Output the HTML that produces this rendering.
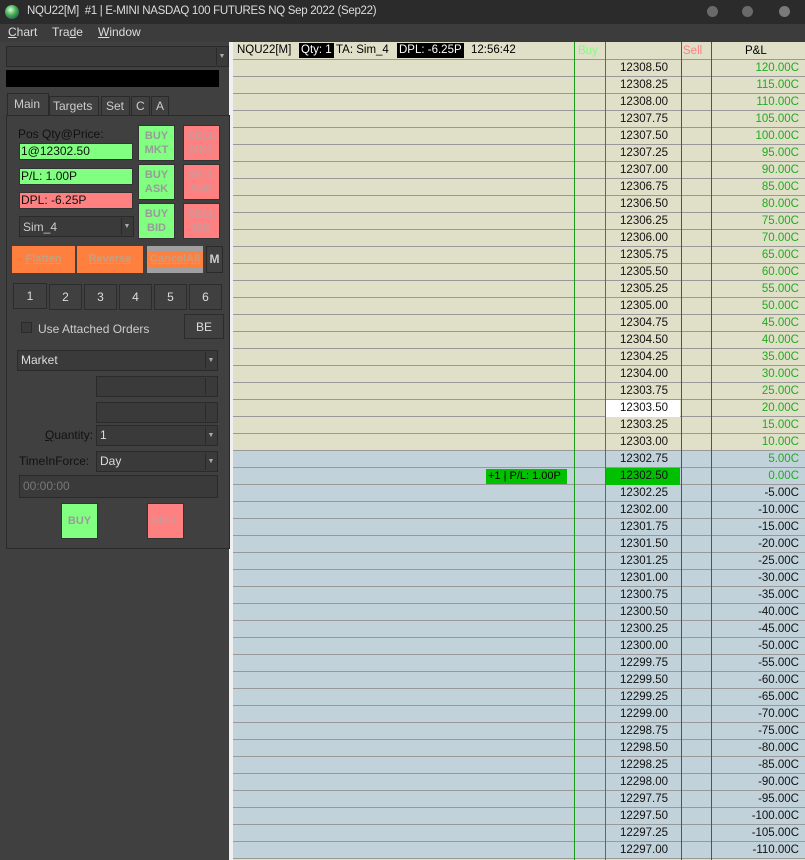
<!DOCTYPE html>
<html><head><meta charset="utf-8"><style>
*{box-sizing:border-box;margin:0;padding:0}
body{width:805px;height:860px;overflow:hidden;background:#404040;font-family:"Liberation Sans",Arial,sans-serif;font-size:12px;position:relative}
.a{position:absolute}
#title{left:0;top:0;width:805px;height:24px;background:#2b2b2b;color:#ddd;font-size:11px}
#menu{left:0;top:24px;width:805px;height:18px;background:#3c3c3c;color:#ddd;font-size:12px}
.dot{width:11px;height:11px;border-radius:50%;background:#6a6a6a;top:6px}
.btn{font-size:11px;font-weight:bold;text-align:center;line-height:14px;border:1px solid #333}
.g{background:#80ff80;color:#9a9a9a}
.r{background:#ff8080;color:#c99}
.o{background:#ff7f3f;color:#c4a080;font-weight:bold;font-size:11px;text-align:center;line-height:26px}
.num{height:26px;border:1px solid #2c2c2c;color:#ddd;text-align:center;line-height:24px;font-size:12px}
.dd{background:#3a3a3a;border:1px solid #2a2a2a;color:#ddd;font-size:12px;padding-left:3px;line-height:19px}
.dd i{position:absolute;right:1px;top:1px;width:11px;bottom:1px;border-left:1px solid #2a2a2a;font-style:normal;font-size:7px;color:#aaa;text-align:center;line-height:17px}
#lad{left:233px;top:42px;width:572px;height:818px;background:#e0dfc8}
.row{position:absolute;left:0;width:572px;height:17px;border-bottom:1px solid #999;font-size:11.5px;line-height:17px}
.row .p{position:absolute;left:372px;width:75px;text-align:right;padding-right:12px;color:#111}
.row .l{position:absolute;right:6px;text-align:right;color:#22aa22}
.b{background:#c1d2da}
.vl{position:absolute;top:0;width:1px;height:818px}
</style></head><body>
<div id="title" class="a">
 <div class="a" style="left:5px;top:5px;width:14px;height:14px;border-radius:50%;background:radial-gradient(circle at 40% 35%,#cfe,#4a4 45%,#247 90%)"></div>
 <div class="a" style="left:27px;top:5px;font-size:11.5px;letter-spacing:-0.3px">NQU22[M]&nbsp; #1 | E-MINI NASDAQ 100 FUTURES NQ Sep 2022 (Sep22)</div>
 <div class="a dot" style="left:707px"></div><div class="a dot" style="left:742px"></div><div class="a dot" style="left:779px;background:#7a7a7a"></div>
</div>
<div id="menu" class="a">
 <span class="a" style="left:8px;top:1px"><u>C</u>hart</span>
 <span class="a" style="left:52px;top:1px">Tra<u>d</u>e</span>
 <span class="a" style="left:98px;top:1px"><u>W</u>indow</span>
</div>
<div class="a" style="left:229px;top:42px;width:4px;height:818px;background:#f0f0f0"></div>
<div class="a dd" style="left:6px;top:46px;width:223px;height:21px"><i>▼</i></div>
<div class="a" style="left:6px;top:70px;width:213px;height:17px;background:#000"></div>
<div class="a" style="left:7px;top:93px;width:42px;height:23px;background:#404040;border:1px solid #2a2a2a;border-bottom:none;color:#ccc;font-size:12px;padding:3px 0 0 6px">Main</div>
<div class="a" style="left:49px;top:96px;width:50px;height:20px;border:1px solid #2a2a2a;color:#ccc;font-size:12px;padding:2px 0 0 3px">Targets</div>
<div class="a" style="left:101px;top:96px;width:29px;height:20px;border:1px solid #2a2a2a;color:#ccc;font-size:12px;padding:2px 0 0 4px">Set</div>
<div class="a" style="left:131px;top:96px;width:19px;height:20px;border:1px solid #2a2a2a;color:#ccc;font-size:12px;padding:2px 0 0 4px">C</div>
<div class="a" style="left:151px;top:96px;width:18px;height:20px;border:1px solid #2a2a2a;color:#ccc;font-size:12px;padding:2px 0 0 4px">A</div>
<div class="a" style="left:6px;top:115px;width:224px;height:434px;border:1px solid #2a2a2a"></div>
<div class="a" style="left:18px;top:127px;color:#111;font-size:12px">Pos Qty@Price:</div>
<div class="a" style="left:19px;top:143px;width:114px;height:17px;background:#80ff80;border:1px solid #333;color:#111;font-size:12px;line-height:15px;padding-left:1px">1@12302.50</div>
<div class="a" style="left:19px;top:168px;width:114px;height:17px;background:#80ff80;border:1px solid #333;color:#111;font-size:12px;line-height:15px;padding-left:1px">P/L: 1.00P</div>
<div class="a" style="left:19px;top:192px;width:114px;height:17px;background:#ff8080;border:1px solid #333;color:#111;font-size:12px;line-height:15px;padding-left:1px">DPL: -6.25P</div>
<div class="a dd" style="left:19px;top:216px;width:115px;height:21px;line-height:21px"><i>▼</i></div><div class="a" style="left:23px;top:220px;color:#ccc;font-size:12px">Sim_4</div>
<div class="a btn g" style="left:138px;top:125px;width:37px;height:36px;padding-top:3px">BUY<br>MKT</div>
<div class="a btn g" style="left:138px;top:164px;width:37px;height:36px;padding-top:3px">BUY<br>ASK</div>
<div class="a btn g" style="left:138px;top:203px;width:37px;height:36px;padding-top:3px">BUY<br>BID</div>
<div class="a btn r" style="left:183px;top:125px;width:37px;height:36px;padding-top:3px">SELL<br>MKT</div>
<div class="a btn r" style="left:183px;top:164px;width:37px;height:36px;padding-top:3px">SELL<br>ASK</div>
<div class="a btn r" style="left:183px;top:203px;width:37px;height:36px;padding-top:3px">SELL<br>BID</div>
<div class="a o" style="left:12px;top:246px;width:63px;height:27px"><u>Flatten</u></div>
<div class="a o" style="left:77px;top:246px;width:66px;height:27px"><u>Reverse</u></div>
<div class="a" style="left:147px;top:246px;width:56px;height:27px;background:#a0a0a0;padding-top:5px"><div class="o" style="height:17px;line-height:17px"><u>CancelAll</u></div></div>
<div class="a" style="left:206px;top:246px;width:17px;height:27px;border:1px solid #2a2a2a;color:#ccc;font-weight:bold;text-align:center;line-height:25px">M</div>
<div class="a num" style="left:13px;top:283px;width:34px">1</div>
<div class="a num" style="left:49px;top:284px;width:33px">2</div>
<div class="a num" style="left:84px;top:284px;width:33px">3</div>
<div class="a num" style="left:119px;top:284px;width:33px">4</div>
<div class="a num" style="left:154px;top:284px;width:33px">5</div>
<div class="a num" style="left:189px;top:284px;width:33px">6</div>
<div class="a" style="left:21px;top:322px;width:11px;height:11px;background:#3a3a3a;border:1px solid #2a2a2a"></div>
<div class="a" style="left:38px;top:322px;color:#ccc;font-size:12px">Use Attached Orders</div>
<div class="a num" style="left:184px;top:314px;width:40px;height:25px">BE</div>
<div class="a dd" style="left:17px;top:350px;width:201px;height:21px"><i>▼</i>Market</div>
<div class="a dd" style="left:96px;top:376px;width:122px;height:21px"><i></i></div>
<div class="a dd" style="left:96px;top:402px;width:122px;height:21px"><i></i></div>
<div class="a" style="left:45px;top:428px;color:#111;font-size:12px"><u>Q</u>uantity:</div>
<div class="a dd" style="left:96px;top:425px;width:122px;height:21px"><i>▼</i>1</div>
<div class="a" style="left:19px;top:454px;color:#111;font-size:12px">TimeInForce:</div>
<div class="a dd" style="left:96px;top:451px;width:122px;height:21px"><i>▼</i>Day</div>
<div class="a dd" style="left:19px;top:475px;width:199px;height:23px;color:#777;line-height:21px">00:00:00</div>
<div class="a btn g" style="left:61px;top:503px;width:37px;height:36px;line-height:34px">BUY</div>
<div class="a btn r" style="left:147px;top:503px;width:37px;height:36px;line-height:34px">SELL</div>

<div id="lad" class="a">
 <div class="a" style="left:0;top:0;width:572px;height:18px;border-bottom:1px solid #999;font-size:11.5px;line-height:17px;white-space:nowrap">
  <span class="a" style="left:4px;top:0">NQU22[M]</span>
  <span class="a" style="left:66px;top:1px;background:#000;color:#fff;line-height:15px;padding:0 2px">Qty: 1</span>
  <span class="a" style="left:103px;top:0">TA: Sim_4</span>
  <span class="a" style="left:164px;top:1px;background:#000;color:#fff;line-height:15px;padding:0 2px">DPL: -6.25P</span>
  <span class="a" style="left:238px;top:0">12:56:42</span>
  <span class="a" style="left:345px;top:1px;color:#80ff80">Buy</span>
  <span class="a" style="left:450px;top:1px;color:#ff8080">Sell</span>
  <span class="a" style="left:512px;top:1px">P&amp;L</span>
 </div>
 <div id="rows"></div>
 <div class="vl" style="left:341px;background:#1a9a1a"></div>
 <div class="vl" style="left:372px;background:#1a9a1a"></div>
 <div class="vl" style="left:448px;background:#cc2020"></div>
 <div class="vl" style="left:478px;background:#cc2020"></div>
</div>
<script>
var h='';for(var i=0;i<47;i++){var p=(12308.5-0.25*i).toFixed(2),l=120-5*i;var cls=i>=23?'row b':'row';var ps='',ex='';
if(i==20)ps='background:#fff;';if(i==24){ps='background:#00c000;';ex='<span style="position:absolute;left:253px;top:1px;background:#00c000;line-height:15px;padding:0 2px;width:81px;white-space:nowrap;font-size:11px">+1 | P/L: 1.00P</span>';}
h+='<div class="'+cls+'" style="top:'+(18+17*i)+'px">'+ex+'<span class="p" style="'+ps+'">'+p+'</span><span class="l" style="color:'+(l>=0?'#22aa22':'#111')+'">'+l.toFixed(2)+'C</span></div>';}
document.getElementById('rows').innerHTML=h;
</script>
</body></html>
